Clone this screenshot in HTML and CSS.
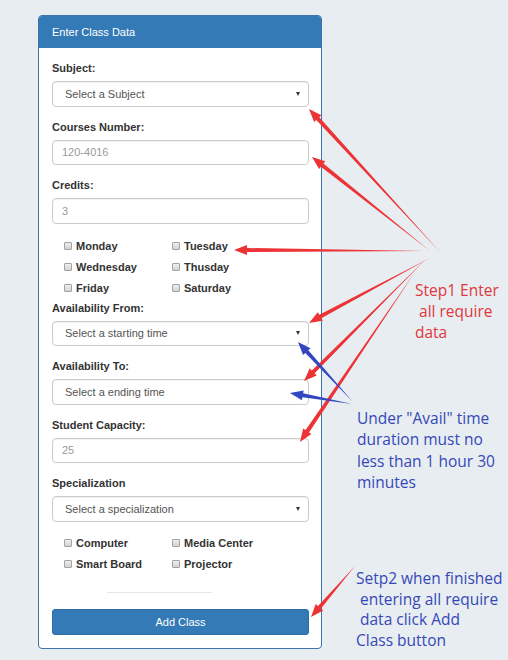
FILE: index.html
```html
<!DOCTYPE html>
<html>
<head>
<meta charset="utf-8">
<title>Enter Class Data</title>
<link rel="stylesheet" href="styles.css">
</head>
<body>
<div class="page">
  <div class="panel">
    <div class="panel-heading">Enter Class Data</div>
    <div class="panel-body">
      <div class="group">
        <div class="label">Subject:</div>
        <div class="control select"><span>Select a Subject</span><span class="caret"></span></div>
      </div>
      <div class="group">
        <div class="label">Courses Number:</div>
        <div class="control input">120-4016</div>
      </div>
      <div class="group">
        <div class="label">Credits:</div>
        <div class="control input">3</div>
      </div>
      <div class="checks">
        <div class="check"><span class="box"></span>Monday</div>
        <div class="check"><span class="box"></span>Tuesday</div>
        <div class="check"><span class="box"></span>Wednesday</div>
        <div class="check"><span class="box"></span>Thusday</div>
        <div class="check"><span class="box"></span>Friday</div>
        <div class="check"><span class="box"></span>Saturday</div>
      </div>
      <div class="group">
        <div class="label">Availability From:</div>
        <div class="control select"><span>Select a starting time</span><span class="caret"></span></div>
      </div>
      <div class="group">
        <div class="label">Availability To:</div>
        <div class="control select"><span>Select a ending time</span></div>
      </div>
      <div class="group">
        <div class="label">Student Capacity:</div>
        <div class="control input">25</div>
      </div>
      <div class="group">
        <div class="label">Specialization</div>
        <div class="control select"><span>Select a specialization</span><span class="caret"></span></div>
      </div>
      <div class="checks checks-equip">
        <div class="check"><span class="box"></span>Computer</div>
        <div class="check"><span class="box"></span>Media Center</div>
        <div class="check"><span class="box"></span>Smart Board</div>
        <div class="check"><span class="box"></span>Projector</div>
      </div>
      <div class="divider"></div>
      <div class="btn">Add Class</div>
    </div>
  </div>

  <svg class="arrows" width="508" height="660" viewBox="0 0 508 660">
    <g fill="#ec3437">
      <polygon points="440,252 319.3,117.2 321.5,115.2 309,109 314.1,122 316.3,119.9"/>
      <polygon points="430,251 323.4,163.5 325.3,161.2 312,157 319.1,169 320.9,166.7"/>
      <polygon points="425,251 247,248 247,245 234,250 247,255 247,252"/>
      <polygon points="430,258 319.3,314.8 317.8,312.2 309,323 322.8,320.8 321.3,318.2"/>
      <polygon points="425,260 311.8,370.4 309.7,368.3 304,381 316.7,375.4 314.6,373.2"/>
      <polygon points="415,272 305.6,430.1 303.2,428.4 300,442 311.4,434 309,432.4"/>
      <polygon points="355,566 318,605.9 315.7,603.9 311,617 323.3,610.4 321,608.5"/>
    </g>
    <g fill="#3447c2">
      <polygon points="353,402 308.3,350.2 310.5,348.2 298,342 303.1,355 305.3,352.9"/>
      <polygon points="352,404 303.1,393.3 303.7,390.4 290,393 301.9,400.2 302.4,397.2"/>
    </g>
  </svg>

  <div class="note note-red note-step1">Step1 Enter
 all require
data</div>
  <div class="note note-blue note-avail">Under "Avail" time
duration must no
less than 1 hour 30
minutes</div>
  <div class="note note-blue note-step2">Setp2 when finished
 entering all require
 data click Add
Class button</div>
</div>
</body>
</html>
```

FILE: styles.css
```css
* { box-sizing: border-box; }

html, body {
  margin: 0;
  padding: 0;
  background: #e8edf1;
}

.page {
  position: relative;
  width: 508px;
  height: 660px;
  overflow: hidden;
  padding-top: 15px;
  font-family: "Liberation Sans", Arial, sans-serif;
  font-size: 11px;
  color: #333;
}

.panel {
  margin-left: 38px;
  width: 284px;
  background: #fff;
  border: 1px solid #3a75ac;
  border-radius: 4px;
  overflow: hidden;
}

.panel-heading {
  height: 32px;
  line-height: 33px;
  padding-left: 13px;
  background: #337ab7;
  color: #fff;
  font-size: 11px;
}

.panel-body {
  padding: 14px 12px 13px 13px;
}

.group {
  margin-bottom: 14px;
}

.label {
  font-weight: bold;
  line-height: 13px;
  margin-bottom: 6px;
  color: #333;
}

.control {
  height: 25.5px;
  border: 1px solid #cccccc;
  border-radius: 4px;
  box-shadow: inset 0 1px 1px rgba(0, 0, 0, 0.06);
  display: flex;
  align-items: center;
}

.select {
  justify-content: space-between;
  padding: 0 8px 0 12px;
  color: #555;
}

.input {
  padding-left: 9px;
  color: #9a9a9a;
}

.caret {
  width: 0;
  height: 0;
  border-left: 2.5px solid transparent;
  border-right: 2.5px solid transparent;
  border-top: 4px solid #333;
}

.checks {
  display: grid;
  grid-template-columns: 108px auto;
  grid-auto-rows: 21px;
  align-items: center;
  padding-left: 12px;
  margin: -2px 0 3px;
}

.checks-equip {
  margin-top: -3px;
}

.check {
  display: flex;
  align-items: center;
  gap: 4px;
  font-weight: bold;
  color: #333;
}

.box {
  width: 8px;
  height: 8px;
  border: 1px solid #a3a3a3;
  border-radius: 1px;
  background: linear-gradient(#efefef, #d2d2d2);
}

.divider {
  margin: 17px 0 16px 55px;
  width: 105px;
  height: 1px;
  background: #e6e6e6;
}

.btn {
  height: 26px;
  border: 1px solid #2e6da4;
  border-radius: 3px;
  background: #337ab7;
  color: #fff;
  display: flex;
  align-items: center;
  justify-content: center;
}

.arrows {
  position: absolute;
  left: 0;
  top: 0;
  pointer-events: none;
}

.note {
  position: absolute;
  font-family: "Open Sans", sans-serif;
  font-size: 15.5px;
  white-space: pre;
}

.note-red { color: #e0383c; }
.note-blue { color: #3548b8; }

.note-step1 {
  left: 415px;
  top: 280px;
  line-height: 21px;
}

.note-avail {
  left: 357px;
  top: 408px;
  line-height: 21.3px;
}

.note-step2 {
  left: 356px;
  top: 568px;
  line-height: 20.7px;
}
```
